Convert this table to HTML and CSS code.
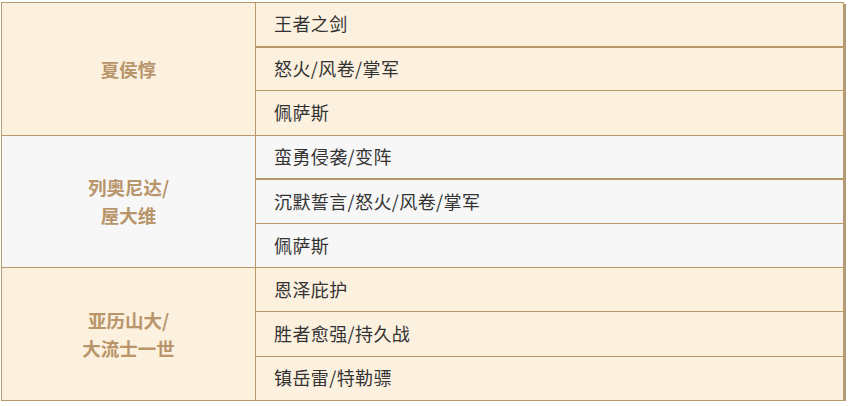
FILE: index.html
```html
<!DOCTYPE html>
<html lang="zh">
<head>
<meta charset="utf-8">
<link rel="stylesheet" href="styles.css">
</head>
<body>
<table class="skills">
  <tbody class="grp cream">
    <tr class="first"><th rowspan="3">夏侯惇</th><td>王者之剑</td></tr>
    <tr><td>怒火/风卷/掌军</td></tr>
    <tr><td>佩萨斯</td></tr>
  </tbody>
  <tbody class="grp grey">
    <tr class="first"><th rowspan="3">列奥尼达/<br>屋大维</th><td>蛮勇侵袭/变阵</td></tr>
    <tr><td>沉默誓言/怒火/风卷/掌军</td></tr>
    <tr><td>佩萨斯</td></tr>
  </tbody>
  <tbody class="grp cream third">
    <tr class="first"><th rowspan="3">亚历山大/<br>大流士一世</th><td>恩泽庇护</td></tr>
    <tr><td>胜者愈强/持久战</td></tr>
    <tr><td>镇岳雷/特勒骠</td></tr>
  </tbody>
</table>
</body>
</html>
```
FILE: styles.css
```css
html, body {
  margin: 0;
  padding: 0;
  background: #ffffff;
}
body {
  padding: 2px 0 0 1px;
  font-family: "Noto Sans CJK SC", "Noto Sans", sans-serif;
}
.skills {
  width: 843px;
  border-collapse: collapse;
  border: 1px solid #b8996c;
  box-shadow: 2px 2px 0 #b39b7a;
  table-layout: fixed;
}
.skills th {
  width: 253px;
  color: #b8956a;
  font-weight: bold;
  font-size: 18.5px;
  line-height: 28px;
  border: 1px solid #b8996c;
  text-align: center;
  vertical-align: middle;
  padding: 0;
}
.skills td {
  height: 44.2px;
  box-sizing: border-box;
  padding: 0 0 2px 18px;
  font-size: 18px;
  letter-spacing: 0.4px;
  color: #333333;
  border: 1px solid #b8996c;
  text-align: left;
  vertical-align: middle;
}
.skills tr.first td {
  border-bottom: 2px solid #b8996c;
}
.skills .third tr.first td {
  border-bottom: 1px solid #b8996c;
}
.cream th, .cream td {
  background: #fcf0df;
}
.grey th, .grey td {
  background: #f7f7f7;
}
```
